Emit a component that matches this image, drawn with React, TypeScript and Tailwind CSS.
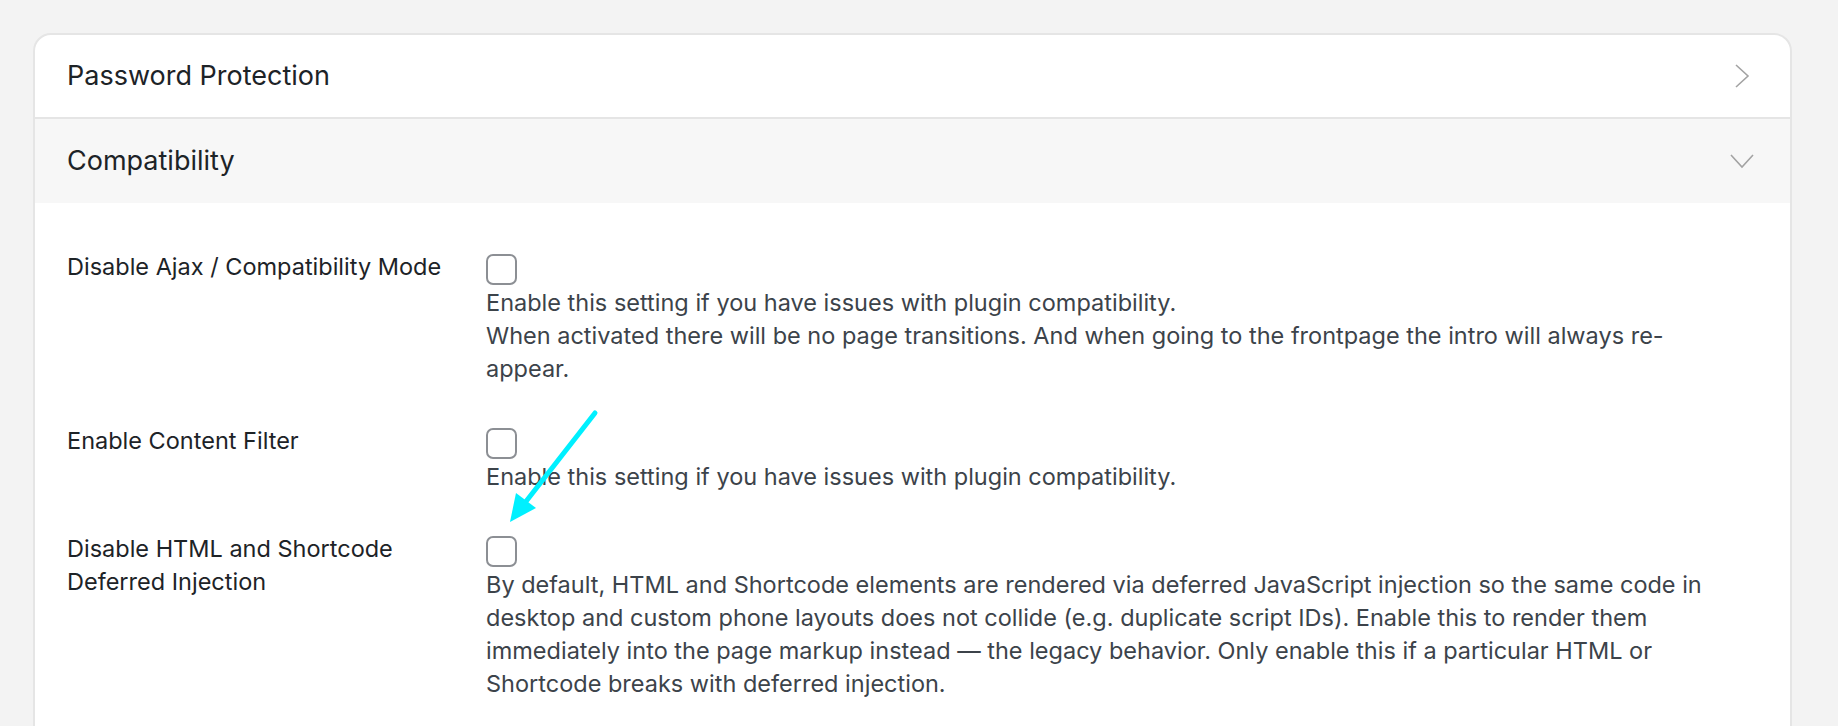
import React from 'react';

const rows = [
  {
    label: 'Disable Ajax / Compatibility Mode',
    desc: [
      'Enable this setting if you have issues with plugin compatibility.',
      'When activated there will be no page transitions. And when going to the frontpage the intro will always re-appear.',
    ],
  },
  {
    label: 'Enable Content Filter',
    desc: ['Enable this setting if you have issues with plugin compatibility.'],
  },
  {
    label: 'Disable HTML and Shortcode Deferred Injection',
    desc: [
      'By default, HTML and Shortcode elements are rendered via deferred JavaScript injection so the same code in desktop and custom phone layouts does not collide (e.g. duplicate script IDs). Enable this to render them immediately into the page markup instead — the legacy behavior. Only enable this if a particular HTML or Shortcode breaks with deferred injection.',
    ],
  },
];

function ChevronRight() {
  return (
    <svg width="24" height="24" viewBox="0 0 24 24" fill="none" stroke="#a3a3a3" strokeWidth="1.6">
      <polyline points="6,1 18,12 6,23" />
    </svg>
  );
}

function ChevronDown() {
  return (
    <svg width="24" height="24" viewBox="0 0 24 24" fill="none" stroke="#a3a3a3" strokeWidth="1.6">
      <polyline points="1,6 12,18 23,6" />
    </svg>
  );
}

export default function App() {
  return (
    <div className="min-h-screen bg-[#f3f3f3] pl-[33px] pr-[46px] pt-[33px] font-['Inter',sans-serif] overflow-hidden h-[726px]">
      <div className="relative bg-white border-2 border-[#e5e5e5] rounded-t-[18px] overflow-hidden">
        {/* section headers */}
        <div className="h-[84px] flex items-center justify-between pl-[32px] pr-[36px] border-b-2 border-[#e5e5e5]">
          <span className="text-[27px] text-[#1d2327]">Password Protection</span>
          <ChevronRight />
        </div>
        <div className="h-[84px] flex items-center justify-between pl-[32px] pr-[36px] bg-[#f7f7f7]">
          <span className="text-[27px] text-[#1d2327]">Compatibility</span>
          <ChevronDown />
        </div>

        {/* settings */}
        <div className="pl-[32px] pr-[67px] pt-[47px] pb-[200px] flex flex-col gap-[39px]">
          {rows.map((row) => (
            <div key={row.label} className="grid grid-cols-[390px_1fr] gap-x-[29px]">
              <div className="text-[23.5px] leading-[33px] text-[#1d2327] pr-[10px]">{row.label}</div>
              <div>
                <div className="mt-[4px] w-[31px] h-[31px] rounded-[7px] border-2 border-[#8c8f94] bg-white" />
                <div className="text-[23.5px] leading-[33px] text-[#3c434a] mt-px">
                  {row.desc.map((d, i) => (
                    <p key={i}>{d}</p>
                  ))}
                </div>
              </div>
            </div>
          ))}
        </div>

        {/* annotation arrow */}
        <svg className="absolute left-[-35px] top-[-35px] pointer-events-none" width="700" height="600">
          <line x1="595" y1="413" x2="524" y2="504" stroke="#00f0ff" strokeWidth="5" strokeLinecap="round" />
          <polygon points="510,522 536,508 516,493" fill="#00f0ff" />
        </svg>
      </div>
    </div>
  );
}
